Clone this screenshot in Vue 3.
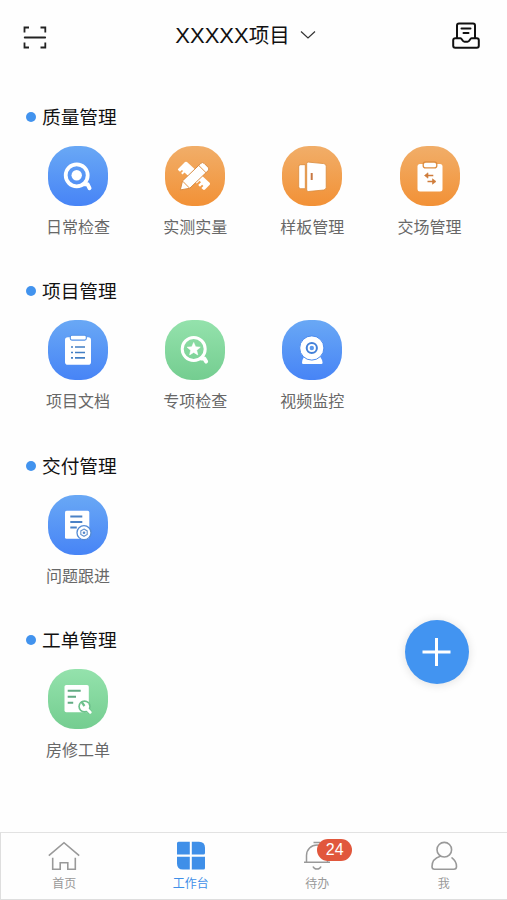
<template>
  <div class="page">
    <header class="header">
      <svg class="icon-scan" viewBox="0 0 24 24" fill="none" stroke="#222" stroke-width="1.8">
        <path d="M1.500 6.500V1.500h4.500M17.500 1.500h4.800v5M1.500 16.500v5h4.500M17.500 21.500h4.800v-5"></path>
        <path d="M1.700 11.500h20.500" stroke-linecap="round"></path>
      </svg>
      <div class="project">
        <span class="project-code">XXXXX</span><span class="project-suffix">项目</span>
        <svg class="icon-arrow" viewBox="0 0 16 10" fill="none" stroke="#333" stroke-width="1.2">
          <path d="M1 1.500l7 6.500 7-6.500"></path>
        </svg>
      </div>
      <svg class="icon-inbox" viewBox="0 0 28 28" fill="none" stroke="#111" stroke-width="2" stroke-linecap="round" stroke-linejoin="round">
        <path d="M5 15.500V3.500a2 2 0 0 1 2-2h14a2 2 0 0 1 2 2v12"></path>
        <path d="M9.500 6.500h9M11.500 11h5"></path>
        <path d="M3.200 16.200h5.300c1.500 0 1.800 3.500 4 3.500h3c2.200 0 2.500-3.500 4-3.500h5.300a2 2 0 0 1 2 2v5.500a2 2 0 0 1-2 2H3.200a2 2 0 0 1-2-2v-5.500a2 2 0 0 1 2-2z"></path>
      </svg>
    </header>

    <main class="content">
      <section v-for="section in sections" :key="section.title" class="section">
        <h2 class="section-title"><span>{{ section.title }}</span></h2>
        <div class="grid">
          <div v-for="item in section.items" :key="item.label" class="grid-item">
            <div class="tile" :class="item.color">
              <svg v-if="item.icon === 'search'" viewBox="0 0 60 60" fill="none" stroke="#fff">
                <circle cx="28.700" cy="29.300" r="11" stroke-width="3.800"></circle>
                <circle cx="28.700" cy="29.300" r="5.200" fill="#fff" stroke="none"></circle>
                <path d="M36.500 38.200h3l2 4" stroke-width="4" stroke-linecap="round" stroke-linejoin="round"></path>
              </svg>
              <svg v-else-if="item.icon === 'measure'" viewBox="0 0 60 60" fill="#fff">
                <path d="M15.300 20.700l4.700-4.600q1-.9 2 0l22.600 20.600q1 1 .1 2L40 43.600q-1 .9-2 0l-1.600-1.500 2-2-1.300-1.300-2.100 2-1.800-1.700 2.800-2.900-1.400-1.400-2.900 2.800-12.200-11.200-2 2-1.400-1.300 2-2-1.200-1.100-1.900 1.800-1.700-1.600q-.9-1.500 0-1.500z"></path>
                <path d="M15.300 43.900l2.200-9L35.900 17.300q1.600-1.500 3.200 0l4.100 4.100q1.500 1.600 0 3.200L24.700 42.300z" stroke="#d98c44" stroke-width="1"></path>
                <path d="M17.700 35.200l6.800 6.900M33.800 19.500l7.200 7.200" fill="none" stroke="#e39345" stroke-width="1"></path>
              </svg>
              <svg v-else-if="item.icon === 'door'" viewBox="0 0 60 60" fill="#fff" stroke="#d98939" stroke-width=".8">
                <path d="M18.700 18.700h4.600v24h-4.600a2 2 0 0 1-2-2v-20a2 2 0 0 1 2-2z"></path>
                <path d="M26.200 16.100l15.500 1.500q2.500.4 2.500 2.600v21.200q0 2.200-2.500 2.600l-15.500 1.500q-1.500 0-1.500-1.500V17.600q0-1.500 1.500-1.500z"></path>
                <path d="M29.700 27v7" stroke="#c87843" stroke-width="2"></path>
              </svg>
              <svg v-else-if="item.icon === 'handover'" viewBox="0 0 60 60">
                <rect x="17.500" y="18" width="25" height="27.500" rx="2.500" fill="#fff"></rect>
                <rect x="23.200" y="16" width="13.600" height="5.900" rx="2.500" fill="#fff" stroke="#dd8d40" stroke-width="1.300"></rect>
                <g fill="none" stroke="#cf7d3c" stroke-width="1.700">
                  <path d="M26 29.500h7.300M27.500 35.500h7"></path>
                  <path d="M28 26.800l-3.500 2.700 3.500 2.700zM32.500 32.800l3.500 2.700-3.500 2.700z" fill="#cf7d3c" stroke-width=".6"></path>
                </g>
              </svg>
              <svg v-else-if="item.icon === 'document'" viewBox="0 0 60 60">
                <rect x="17" y="17.300" width="26" height="27.400" rx="2.800" fill="#fff"></rect>
                <rect x="22.300" y="15.300" width="16" height="4.800" rx="1.600" fill="#fff" stroke="#5492e8" stroke-width="1.100"></rect>
                <path d="M23 27h2M27 27h10M23 32.500h2M27 32.500h10M23 37.900h2M27 37.900h10" stroke="#437fc4" stroke-width="1.700"></path>
              </svg>
              <svg v-else-if="item.icon === 'star'" viewBox="0 0 60 60" fill="none" stroke="#fff">
                <circle cx="28.700" cy="29" r="11.500" stroke-width="3"></circle>
                <path d="M28.700 22.500l1.900 4.300 4.700.4-3.600 3.100 1.100 4.600-4.100-2.500-4.100 2.500 1.100-4.600-3.600-3.100 4.700-.4z" fill="#fff" stroke="#fff" stroke-width=".6" stroke-linejoin="round"></path>
                <path d="M36.300 38.400h3l1.800 3.200" stroke-width="4" stroke-linecap="round" stroke-linejoin="round"></path>
              </svg>
              <svg v-else-if="item.icon === 'camera'" viewBox="0 0 60 60" fill="#fff">
                <path d="M22.200 36.500h15.800q2.300 3 2.600 6.300 0 1.300-1.300 1.300H21.300q-1.300 0-1.300-1.300.2-3.300 2.200-6.300z"></path>
                <circle cx="29.800" cy="28" r="12.100" stroke="#4b8bee" stroke-width="1"></circle>
                <circle cx="29.800" cy="28" r="5.100" stroke="#4380d8" stroke-width="2"></circle>
                <circle cx="29.800" cy="28" r="2.200" fill="#5c99ed"></circle>
              </svg>
              <svg v-else-if="item.icon === 'issue'" viewBox="0 0 60 60" fill="none">
                <rect x="17" y="15.800" width="24.300" height="28" rx="1.600" fill="#fff"></rect>
                <path d="M22.300 21.600h12M22.300 27h12M22.300 32.600h6.500" stroke="#4b82c6" stroke-width="2"></path>
                <circle cx="36" cy="37.700" r="7" fill="#fff" stroke="#538bd5" stroke-width="1.300"></circle>
                <path d="M36 34.100l3.200 1.800v3.600L36 41.300l-3.200-1.800v-3.600z" stroke="#6594cd" stroke-width="1.100"></path>
                <circle cx="36" cy="37.700" r="1.300" fill="#5288cb"></circle>
              </svg>
              <svg v-else viewBox="0 0 60 60" fill="none">
                <rect x="16.500" y="16" width="24.300" height="27.300" rx="1.800" fill="#fff"></rect>
                <path d="M19.700 21.800h13M19.700 27.800h8.300M19.700 33.800h5.500" stroke="#62ab83" stroke-width="2"></path>
                <circle cx="36.500" cy="37.500" r="6.200" fill="#6dc08c"></circle>
                <path d="M38.500 39.500l4 4" stroke="#6dc08c" stroke-width="4.500"></path>
                <circle cx="36.500" cy="37.500" r="4.600" fill="#fff"></circle>
                <path d="M38.500 39.500l3.700 3.700" stroke="#fff" stroke-width="3" stroke-linecap="round"></path>
                <path d="M33.300 32.500l3.200 4.500" stroke="#6dc08c" stroke-width="2.200"></path>
              </svg>
            </div>
            <span class="label">{{ item.label }}</span>
          </div>
        </div>
      </section>
    </main>

    <button class="btn-add" aria-label="添加">
      <svg viewBox="0 0 64 64" stroke="#fff" stroke-width="3">
        <path d="M17.500 32h28M31.500 18v28"></path>
      </svg>
    </button>

    <nav class="tabbar">
      <div v-for="tab in tabs" :key="tab.icon" class="tab" :class="{ active: tab.icon === activeTab }">
        <div class="tab-icon">
          <svg v-if="tab.icon === 'home'" viewBox="0 0 32 32" fill="none" stroke="currentColor" stroke-width="1.600">
            <path d="M.8 15.700L16 2.700l15.200 13M4.700 17.800v11.400h7.500v-6.400h7.600v6.400h7.500V17.800"></path>
          </svg>
          <svg v-else-if="tab.icon === 'workbench'" viewBox="0 0 32 32" fill="currentColor">
            <path d="M3.500 1.700h11.300v12.800H2V3.200q0-1.500 1.500-1.500zM16.800 1.700H24q6 0 6 6v5.300q0 1.500-1.500 1.500H16.800zM2 16.700h12.800v12.800H8q-6 0-6-6zM16.800 16.700H30V28q0 1.500-1.500 1.500H16.800z"></path>
          </svg>
          <svg v-else-if="tab.icon === 'todo'" viewBox="0 0 32 32" fill="none" stroke="currentColor" stroke-width="1.500">
            <path d="M12.500 2.400h7M3 22.300h26M5.500 22v-6.500a10.500 10.500 0 0 1 21 0V22M12 26.500q1 2.600 4 2.600t4-2.600"></path>
          </svg>
          <svg v-else viewBox="0 0 32 32" fill="none" stroke="currentColor" stroke-width="1.600" stroke-linecap="round">
            <circle cx="16.300" cy="9.700" r="7.300"></circle>
            <path d="M12.300 16.200C7 17.800 4 21.500 4 26.500q0 2.700 2.500 2.700h19.300q2.700 0 2.700-2.700c0-3.300-1.600-6.500-4.500-8.600"></path>
          </svg>
          <span v-if="tab.badge" class="badge">{{ tab.badge }}</span>
        </div>
        <span class="tab-label">{{ tab.label }}</span>
      </div>
    </nav>
  </div>
</template>

<script setup>
import { ref } from 'vue'

const activeTab = ref('workbench')

const sections = [
  {
    title: '质量管理',
    items: [
      { label: '日常检查', icon: 'search', color: 'blue' },
      { label: '实测实量', icon: 'measure', color: 'orange' },
      { label: '样板管理', icon: 'door', color: 'orange' },
      { label: '交场管理', icon: 'handover', color: 'orange' }
    ]
  },
  {
    title: '项目管理',
    items: [
      { label: '项目文档', icon: 'document', color: 'blue' },
      { label: '专项检查', icon: 'star', color: 'green' },
      { label: '视频监控', icon: 'camera', color: 'blue' }
    ]
  },
  {
    title: '交付管理',
    items: [{ label: '问题跟进', icon: 'issue', color: 'blue' }]
  },
  {
    title: '工单管理',
    items: [{ label: '房修工单', icon: 'repair', color: 'green' }]
  }
]

const tabs = [
  { label: '首页', icon: 'home' },
  { label: '工作台', icon: 'workbench' },
  { label: '待办', icon: 'todo', badge: 24 },
  { label: '我', icon: 'mine' }
]
</script>

<style>
body {
  margin: 0;
  background: #fefefe;
}
</style>

<style scoped>
.page {
  height: 100vh;
  display: flex;
  flex-direction: column;
  overflow: hidden;
  font-family: "Liberation Sans", "Noto Sans CJK SC", sans-serif;
  color: #111;
}

.header {
  height: 72px;
  flex-shrink: 0;
  display: flex;
  align-items: center;
  justify-content: space-between;
  padding: 0 27px 0 23px;
  box-sizing: border-box;
}

.icon-scan {
  width: 24px;
  height: 24px;
  margin-top: 3px;
}

.project {
  display: flex;
  align-items: center;
  height: 30px;
  line-height: 30px;
  margin-right: 8px;
}

.project-code {
  font-size: 22px;
}

.project-suffix {
  font-size: 20.5px;
}

.icon-arrow {
  width: 16px;
  height: 10px;
  margin: 0 0 3px 10px;
}

.icon-inbox {
  width: 28px;
  height: 28px;
}

.content {
  flex: 1;
  padding-top: 31px;
}

.section {
  height: 174.4px;
}

.section-title {
  display: flex;
  align-items: center;
  gap: 6px;
  height: 28px;
  margin: 0 0 15px;
  padding-left: 26px;
  font-size: 18.7px;
  font-weight: 400;
  line-height: 26px;
}

.section-title::before {
  content: '';
  width: 10px;
  height: 10px;
  border-radius: 50%;
  background: #4293ee;
}

.section-title span {
  padding-top: 2px;
}

.grid {
  display: grid;
  grid-template-columns: repeat(4, 117.2px);
  padding-left: 19.4px;
}

.grid-item {
  display: flex;
  flex-direction: column;
  align-items: center;
}

.tile {
  width: 60px;
  height: 60px;
  border-radius: 27px;
}

.tile svg {
  display: block;
  width: 60px;
  height: 60px;
}

.blue {
  background: linear-gradient(#69a8f5, #4784f6);
}

.orange {
  background: linear-gradient(#f1ae69, #f29136);
}

.green {
  background: linear-gradient(#94e2ac, #74cd90);
}

.label {
  margin-top: 10px;
  font-size: 16px;
  line-height: 24px;
  color: #686868;
}

.btn-add {
  position: fixed;
  right: 38px;
  top: 620px;
  width: 64px;
  height: 64px;
  padding: 0;
  border: none;
  border-radius: 50%;
  background: #4294f1;
  box-shadow: 0 1px 10px rgba(0, 0, 0, 0.12);
  cursor: pointer;
}

.btn-add svg {
  display: block;
}

.tabbar {
  display: flex;
  height: 68px;
  flex-shrink: 0;
  box-sizing: border-box;
  border-top: 1px solid #e2e2e2;
  border-left: 1px solid #dedede;
  border-bottom: 1px solid #dedede;
}

.tab {
  flex: 1;
  display: flex;
  flex-direction: column;
  align-items: center;
  padding-top: 7px;
  color: #999;
}

.tab.active {
  color: #3f8fe8;
}

.tab-icon {
  position: relative;
  width: 32px;
  height: 32px;
}

.tab-icon svg {
  display: block;
}

.tab-label {
  margin-top: 3px;
  font-size: 12px;
  line-height: 18px;
}

.badge {
  position: absolute;
  left: 16px;
  top: -1px;
  width: 35px;
  height: 22px;
  border-radius: 11px;
  background: #e1573c;
  color: #fff;
  font-size: 16px;
  line-height: 22px;
  text-align: center;
}
</style>
